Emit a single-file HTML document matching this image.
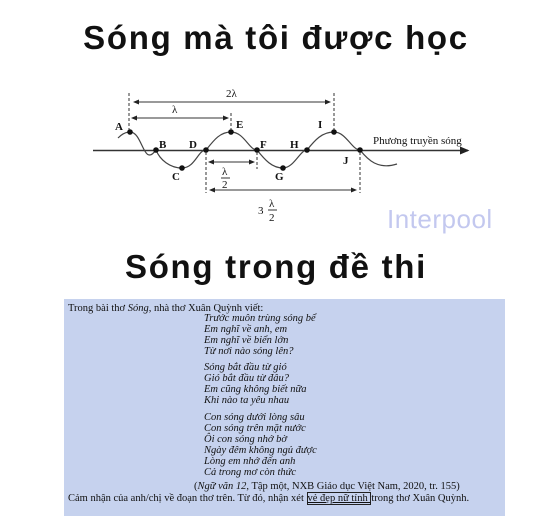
<!DOCTYPE html>
<html><head><meta charset="utf-8"><style>
body{margin:0;width:552px;height:516px;background:#fff;position:relative;overflow:hidden;font-family:"Liberation Sans",sans-serif}
.t{position:absolute;left:0;width:552px;text-align:center;font-weight:bold;color:#111;font-size:33px;letter-spacing:1.7px}
.photo{position:absolute;left:64px;top:299px;width:441px;height:217px;background:#c6d2ee;font-family:"Liberation Serif",serif;color:#111;font-size:10.5px;line-height:11px}
.photo div{position:absolute;white-space:nowrap}
.p{left:140px;font-style:italic}
</style></head><body>
<div class="t" style="top:19px">Sóng mà tôi được học</div>
<div class="t" style="top:248px">Sóng trong đề thi</div>
<svg width="552" height="516" style="position:absolute;left:0;top:0" font-family="Liberation Serif,serif">
<defs><marker id="a" markerWidth="6" markerHeight="6" refX="5" refY="3" orient="auto-start-reverse"><path d="M0,0.5 L6,3 L0,5.5z" fill="#222"/></marker></defs>
<line x1="93" y1="150.5" x2="468" y2="150.5" stroke="#333" stroke-width="1.6" marker-end="url(#a)"/>
<path d="M118,138 Q124,132 130,132 C143,132 143,168 156,150 C160,160 170,168 182,168 C195,168 198,150 206,150 C214,140 220,132 231,132 C244,132 249,150 257,150 C265,160 272,168 283,168 C294,168 300,150 307,150 C315,140 322,132 334,132 C346,132 352,150 360,150 C368,160 378,170 397,164" fill="none" stroke="#444" stroke-width="1.2"/>
<g fill="#111"><circle cx="130" cy="132" r="2.8"/><circle cx="156" cy="150" r="2.8"/><circle cx="182" cy="168" r="2.8"/><circle cx="206" cy="150" r="2.8"/><circle cx="231" cy="132" r="2.8"/><circle cx="257" cy="150" r="2.8"/><circle cx="283" cy="168" r="2.8"/><circle cx="307" cy="150" r="2.8"/><circle cx="334" cy="132" r="2.8"/><circle cx="360" cy="150" r="2.8"/></g>
<g stroke="#333" stroke-dasharray="3,2" stroke-width="1"><line x1="129" y1="93" x2="129" y2="130"/><line x1="334" y1="93" x2="334" y2="130"/><line x1="231" y1="113" x2="231" y2="130"/><line x1="206" y1="152" x2="206" y2="193"/><line x1="257" y1="152" x2="257" y2="169"/><line x1="360" y1="152" x2="360" y2="193"/></g>
<g stroke="#333" stroke-width="1"><line x1="134" y1="102" x2="330" y2="102" marker-start="url(#a)" marker-end="url(#a)"/><line x1="132" y1="118" x2="228" y2="118" marker-start="url(#a)" marker-end="url(#a)"/><line x1="209" y1="162" x2="254" y2="162" marker-start="url(#a)" marker-end="url(#a)"/><line x1="210" y1="190" x2="356" y2="190" marker-start="url(#a)" marker-end="url(#a)"/><line x1="221" y1="178" x2="230" y2="178"/><line x1="268" y1="210" x2="277" y2="210"/></g>
<g font-size="11" fill="#111"><text x="226" y="97">2λ</text><text x="172" y="113">λ</text><text x="222" y="175">λ</text><text x="222" y="188">2</text><text x="258" y="214">3</text><text x="269" y="207">λ</text><text x="269" y="221">2</text>
<text x="373" y="144" font-size="11">Phương truyền sóng</text></g>
<g font-size="11" font-weight="bold" fill="#111"><text x="115" y="130">A</text><text x="159" y="148">B</text><text x="172" y="180">C</text><text x="189" y="148">D</text><text x="236" y="128">E</text><text x="260" y="148">F</text><text x="275" y="180">G</text><text x="290" y="148">H</text><text x="318" y="128">I</text><text x="343" y="164">J</text></g>
<text x="387" y="228" font-family="Liberation Sans,sans-serif" font-size="26" fill="#c3c8ef" letter-spacing="0.5">Interpool</text>
</svg>
<div class="photo">
<div style="left:4px;top:4px">Trong bài thơ <i>Sóng</i>, nhà thơ Xuân Quỳnh viết:</div>
<div class="p" style="top:14px">Trước muôn trùng sóng bể<br>Em nghĩ về anh, em<br>Em nghĩ về biển lớn<br>Từ nơi nào sóng lên?</div>
<div class="p" style="top:63px">Sóng bắt đầu từ gió<br>Gió bắt đầu từ đâu?<br>Em cũng không biết nữa<br>Khi nào ta yêu nhau</div>
<div class="p" style="top:113px">Con sóng dưới lòng sâu<br>Con sóng trên mặt nước<br>Ôi con sóng nhớ bờ<br>Ngày đêm không ngủ được<br>Lòng em nhớ đến anh<br>Cả trong mơ còn thức</div>
<div style="left:130px;top:182px">(<i>Ngữ văn 12</i>, Tập một, NXB Giáo dục Việt Nam, 2020, tr. 155)</div>
<div style="left:4px;top:194px">Cảm nhận của anh/chị về đoạn thơ trên. Từ đó, nhận xét <span style="border:1px solid #222;text-decoration:underline">vẻ đẹp nữ tính </span>trong thơ Xuân Quỳnh.</div>
</div>
</body></html>
